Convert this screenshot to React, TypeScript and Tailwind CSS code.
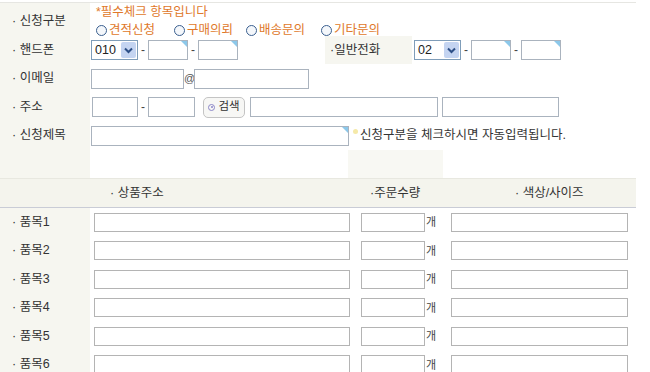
import clsx from "clsx";

function Box({ className, tri }: { className: string; tri?: boolean }) {
  return (
    <span className={clsx("relative block shrink-0 border border-[#aab3be] bg-white", className)}>
      {tri && (
        <span className="absolute right-0 top-0 h-0 w-0 border-l-[6px] border-t-[6px] border-l-transparent border-t-[#8cc8ea]" />
      )}
    </span>
  );
}

function Select({ value }: { value: string }) {
  return (
    <span className="flex h-[20px] w-[47px] shrink-0 items-center border border-[#7f9db9] bg-white pl-[3px] text-[12.5px] text-[#222]">
      <span className="flex-1">{value}</span>
      <span className="mr-[1px] flex h-[16px] w-[15px] items-center justify-center rounded-[2px] bg-[#c4d4f1]">
        <svg width="9" height="7" viewBox="0 0 9 7">
          <path d="M1 1.5 L4.5 5 L8 1.5" fill="none" stroke="#2d4f86" strokeWidth="2" />
        </svg>
      </span>
    </span>
  );
}

function Radio({ label, className }: { label: string; className?: string }) {
  return (
    <span className={clsx("flex items-center", className)}>
      <span className="mr-[2px] h-[11px] w-[11px] rounded-full border border-[#3a5f8f] bg-[#f4f7fb]" />
      <span>{label}</span>
    </span>
  );
}

function Label({ text, className }: { text?: string; className?: string }) {
  return (
    <div
      className={clsx(
        "flex w-[90px] shrink-0 items-center self-stretch bg-[#f6f6f0] pl-[12px] text-[12.5px] text-[#333]",
        className
      )}
    >
      {text && `· ${text}`}
    </div>
  );
}

const Dash = () => <span className="w-[10px] shrink-0 text-center text-[12px] text-[#444]">-</span>;

const items = ["품목1", "품목2", "품목3", "품목4", "품목5", "품목6"];

export default function App() {
  return (
    <div className="h-[372px] w-[650px] overflow-hidden bg-white pt-[2px] font-['Liberation_Sans','Noto_Sans_CJK_KR',sans-serif] text-[12.5px] text-[#333]">
      <div className="w-[636px] border-t border-[#e6e6e2]">
        {/* 신청구분 */}
        <div className="flex h-[33px]">
          <Label text="신청구분" className="pt-[3px]" />
          <div className="flex flex-col pl-[6px] text-[12.5px] text-[#e0782a]">
            <span className="mt-[2px] leading-[14px]">*필수체크 항목입니다</span>
            <div className="mt-[4px] flex leading-[14px]">
              <Radio label="견적신청" />
              <Radio label="구매의뢰" className="ml-[19px]" />
              <Radio label="배송문의" className="ml-[13px]" />
              <Radio label="기타문의" className="ml-[16px]" />
            </div>
          </div>
        </div>

        {/* 핸드폰 / 일반전화 */}
        <div className="flex h-[28px] items-center">
          <Label text="핸드폰" />
          <div className="ml-[1px] flex items-center">
            <Select value="010" />
            <Dash />
            <Box className="h-[20px] w-[40px]" tri />
            <Dash />
            <Box className="h-[20px] w-[40px]" tri />
          </div>
          <div className="ml-[87px] flex w-[87px] items-center self-stretch bg-[#f6f6f0] pl-[5px]">·일반전화</div>
          <div className="ml-[2px] flex items-center">
            <Select value="02" />
            <Dash />
            <Box className="h-[20px] w-[40px]" tri />
            <Dash />
            <Box className="h-[20px] w-[40px]" tri />
          </div>
        </div>

        {/* 이메일 */}
        <div className="flex h-[29px] items-center">
          <Label text="이메일" />
          <div className="ml-[1px] flex items-center">
            <Box className="h-[20px] w-[93px]" />
            <span className="w-[10px] text-center text-[11px] text-[#555]">@</span>
            <Box className="h-[20px] w-[115px]" />
          </div>
        </div>

        {/* 주소 */}
        <div className="flex h-[28px] items-center">
          <Label text="주소" />
          <div className="ml-[2px] flex items-center">
            <Box className="h-[20px] w-[46px] border-[#9aaabb]" />
            <Dash />
            <Box className="h-[20px] w-[47px] border-[#9aaabb]" />
            <button className="ml-[8px] flex h-[21px] w-[42px] items-center justify-center gap-[3px] rounded-[5px] border border-[#c4c4c4] bg-[#f7f7f5] text-[11.5px] text-[#333]">
              <span className="flex h-[7px] w-[7px] items-center justify-center rounded-full border border-[#8b86c8]">
                <span className="h-[2px] w-[2px] rounded-full bg-[#8b86c8]" />
              </span>
              검색
            </button>
            <Box className="ml-[5px] h-[20px] w-[188px] border-[#9aaabb]" />
            <Box className="ml-[4px] h-[20px] w-[117px] border-[#9aaabb]" />
          </div>
        </div>

        {/* 신청제목 */}
        <div className="flex h-[29px] items-center">
          <Label text="신청제목" />
          <div className="ml-[1px] flex items-center">
            <Box className="h-[20px] w-[258px]" tri />
            <span className="ml-[4px] mr-[2px] h-[5px] w-[5px] -translate-y-[4px] rounded-full bg-[#f5e9a8]" />
            <span className="text-[12.5px] text-[#333]">신청구분을 체크하시면 자동입력됩니다.</span>
          </div>
        </div>

        {/* blank */}
        <div className="flex h-[28px]">
          <Label />
          <div className="ml-[258px] w-[95px] bg-[#f8f8f3]" />
        </div>

        {/* header */}
        <div className="flex h-[30px] items-center border-t border-b border-t-[#e8e8e0] border-b-[#c9ccd6] bg-[#f4f4ed] text-[12.5px]">
          <div className="w-[370px] pl-[110px]">· 상품주소</div>
          <div className="w-[145px]">·주문수량</div>
          <div>· 색상/사이즈</div>
        </div>

        {/* items */}
        {items.map((it) => (
          <div key={it} className="flex h-[28.5px] items-center">
            <Label text={it} />
            <Box className="ml-[4px] h-[19px] w-[256px] border-[#b4b4b4]" />
            <Box className="ml-[11px] h-[19px] w-[64px] border-[#b4b4b4]" />
            <span className="w-[26px] pl-[1px] text-[11px] text-[#444]">개</span>
            <Box className="h-[19px] w-[177px] border-[#b4b4b4]" />
          </div>
        ))}
      </div>
    </div>
  );
}
